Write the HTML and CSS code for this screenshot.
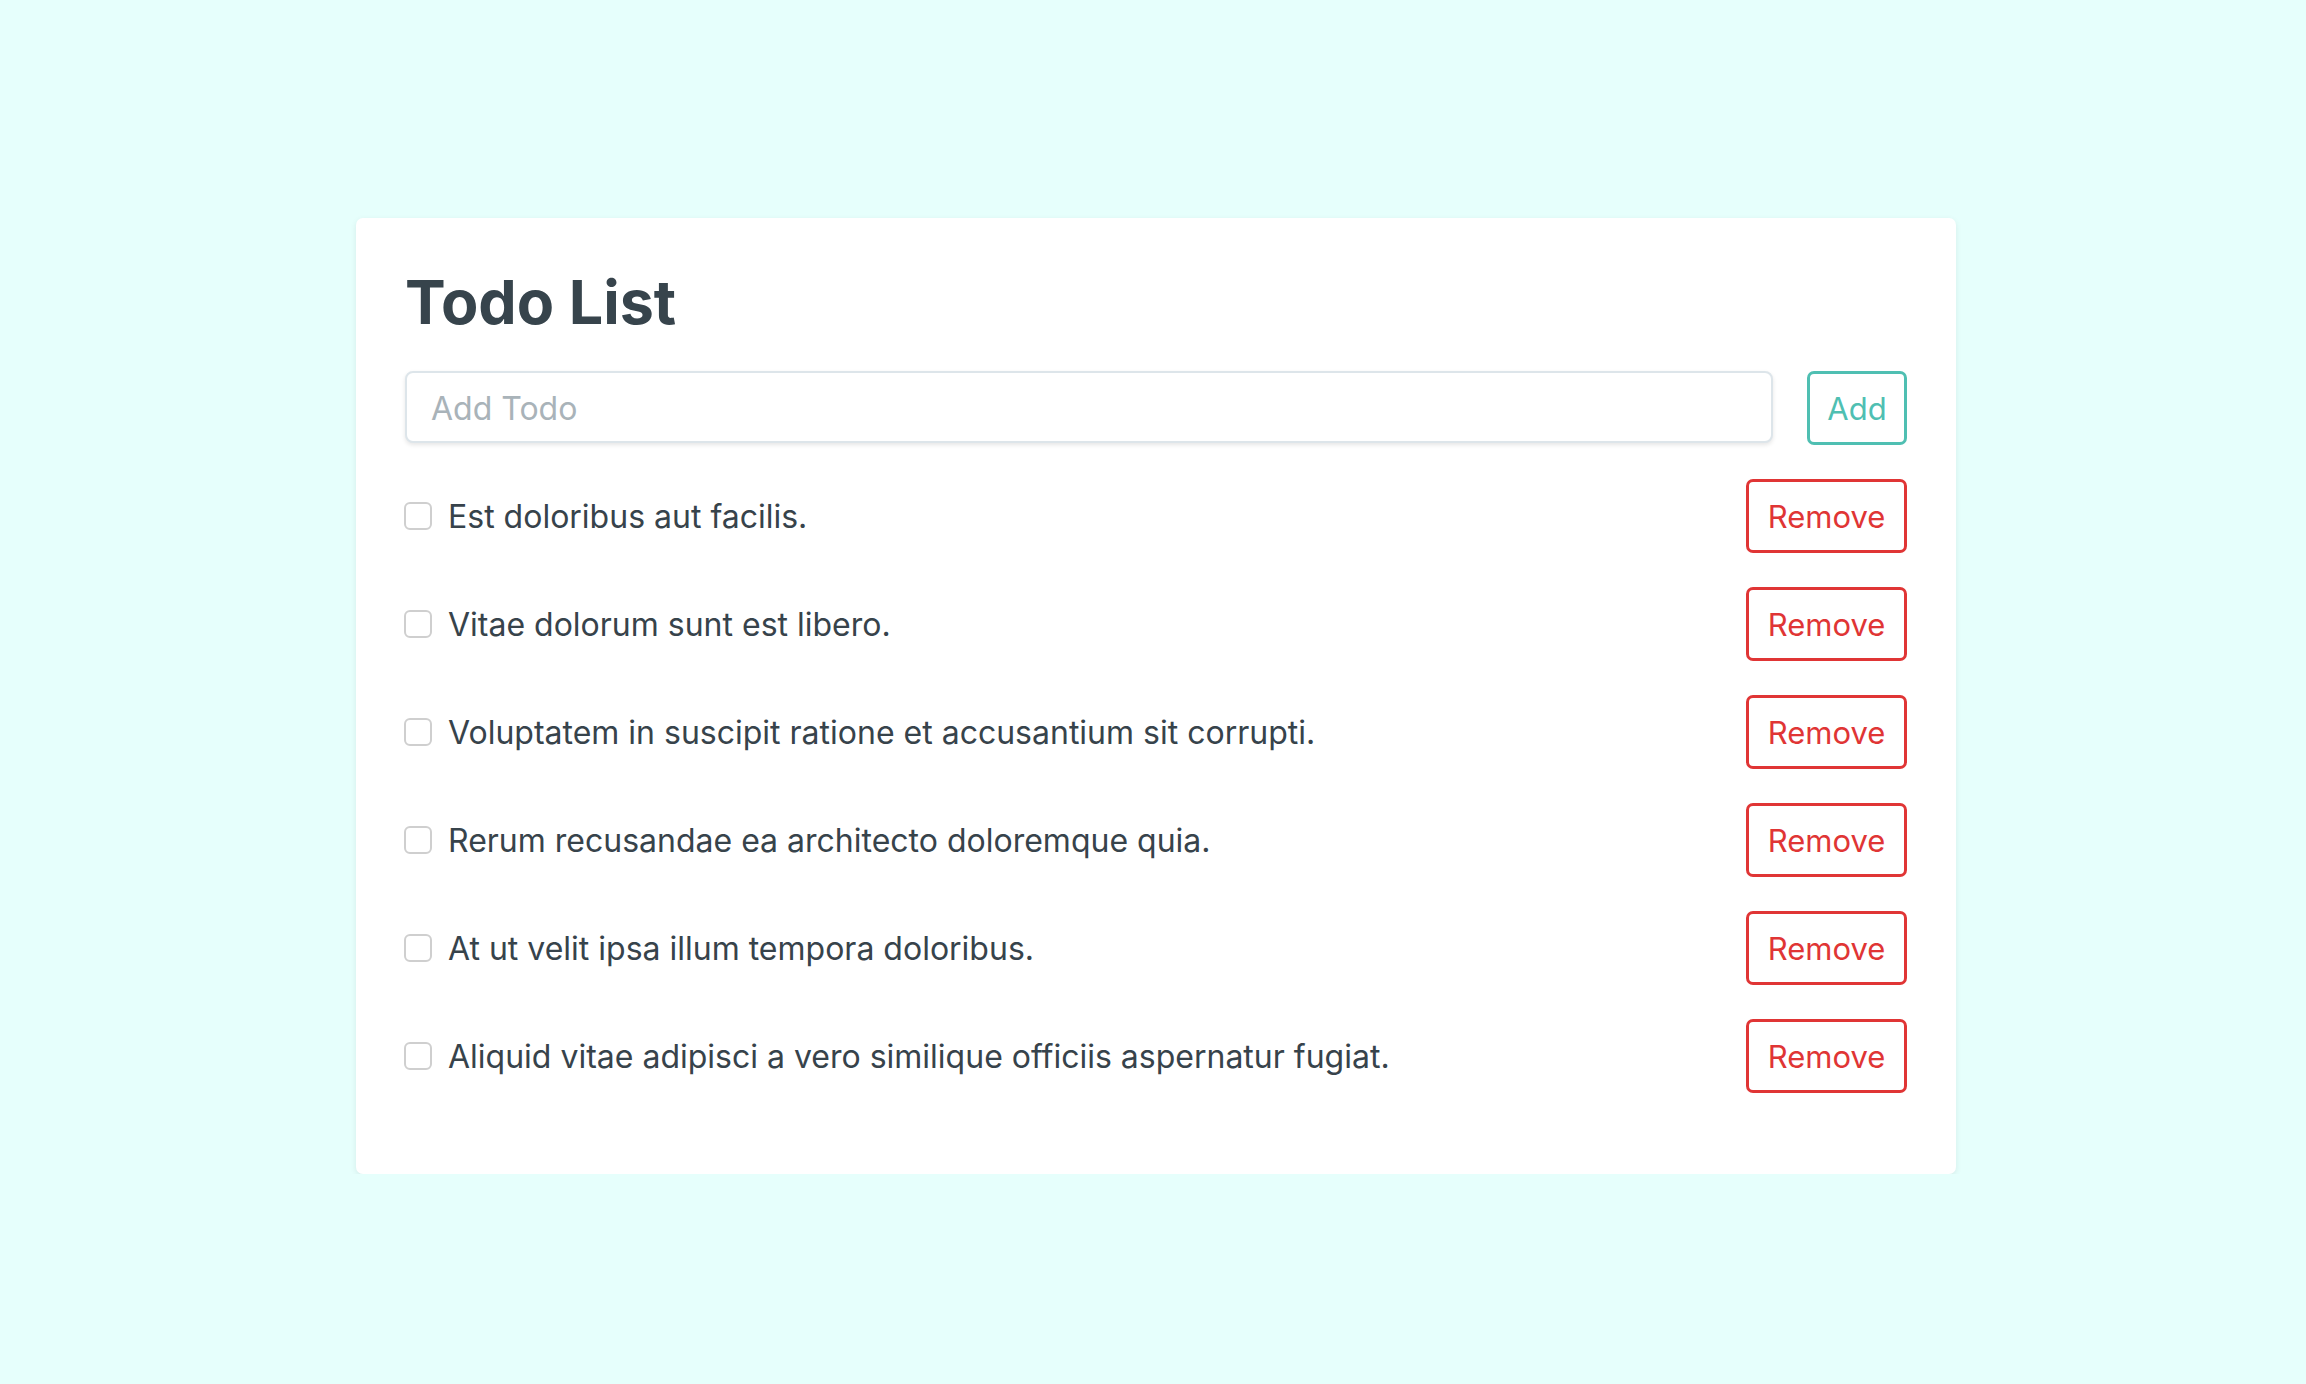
FILE: index.html
```html
<!DOCTYPE html>
<html lang="en">
<head>
  <meta charset="UTF-8" />
  <meta name="viewport" content="width=device-width, initial-scale=1.0" />
  <title>Todo List</title>
  <link rel="stylesheet" href="styles.css">
</head>
<body>
  <div class="card">
    <h1>Todo List</h1>
    <form class="add-form" onsubmit="return false">
      <input class="add-input" placeholder="Add Todo">
      <button type="submit" class="btn btn-add">Add</button>
    </form>
    <ul class="todo-list">
      <li class="todo">
        <label><input type="checkbox" class="check"><span>Est doloribus aut facilis.</span></label>
        <button class="btn btn-remove">Remove</button>
      </li>
      <li class="todo">
        <label><input type="checkbox" class="check"><span>Vitae dolorum sunt est libero.</span></label>
        <button class="btn btn-remove">Remove</button>
      </li>
      <li class="todo">
        <label><input type="checkbox" class="check"><span>Voluptatem in suscipit ratione et accusantium sit corrupti.</span></label>
        <button class="btn btn-remove">Remove</button>
      </li>
      <li class="todo">
        <label><input type="checkbox" class="check"><span>Rerum recusandae ea architecto doloremque quia.</span></label>
        <button class="btn btn-remove">Remove</button>
      </li>
      <li class="todo">
        <label><input type="checkbox" class="check"><span>At ut velit ipsa illum tempora doloribus.</span></label>
        <button class="btn btn-remove">Remove</button>
      </li>
      <li class="todo">
        <label><input type="checkbox" class="check"><span>Aliquid vitae adipisci a vero similique officiis aspernatur fugiat.</span></label>
        <button class="btn btn-remove">Remove</button>
      </li>
    </ul>
  </div>
</body>
</html>
```

FILE: styles.css
```css
body {
  margin: 0;
  padding-top: 218px;
  background: #e6fffc;
  font-family: Inter, "Noto Sans", sans-serif;
  color: #37434b;
}
.card {
  width: 1600px;
  box-sizing: border-box;
  margin-left: 356px;
  padding: 48px 49px 81px;
  background: #fff;
  border-radius: 7px;
  box-shadow: 0 2px 6px rgba(0, 0, 0, 0.08);
}
h1 {
  margin: 0 0 33px;
  font-size: 61px;
  line-height: 72px;
  font-weight: 700;
  color: #37444c;
}
.add-form {
  display: flex;
  align-items: flex-start;
  gap: 34px;
}
.add-input {
  flex: 1;
  height: 72px;
  box-sizing: border-box;
  padding: 2px 24px 0;
  border: 2px solid #dde5ea;
  border-radius: 8px;
  box-shadow: 0 2px 4px rgba(0, 0, 0, 0.1);
  font-family: inherit;
  font-size: 32px;
  color: #37434b;
  outline: none;
}
.add-input::placeholder {
  color: #a9b3b9;
}
.btn {
  height: 74px;
  box-sizing: border-box;
  padding: 0;
  background: #fff;
  border: 3px solid;
  border-radius: 7px;
  font-family: inherit;
  font-size: 31px;
  cursor: pointer;
}
.btn-add {
  width: 100px;
  color: #4fbfb2;
  border-color: #4fbfb2;
}
.btn-remove {
  width: 161px;
  color: #e03535;
  border-color: #e03535;
}
.todo-list {
  list-style: none;
  margin: 34px 0 0;
  padding: 0;
  display: flex;
  flex-direction: column;
  gap: 34px;
}
.todo {
  display: flex;
  align-items: center;
  justify-content: space-between;
}
.todo label {
  display: flex;
  align-items: center;
  gap: 16px;
  font-size: 32px;
}
.check {
  appearance: none;
  width: 28px;
  height: 28px;
  margin: 0 0 0 -1px;
  border: 2px solid #cfcfcf;
  border-radius: 6px;
  background: #fff;
}
```
